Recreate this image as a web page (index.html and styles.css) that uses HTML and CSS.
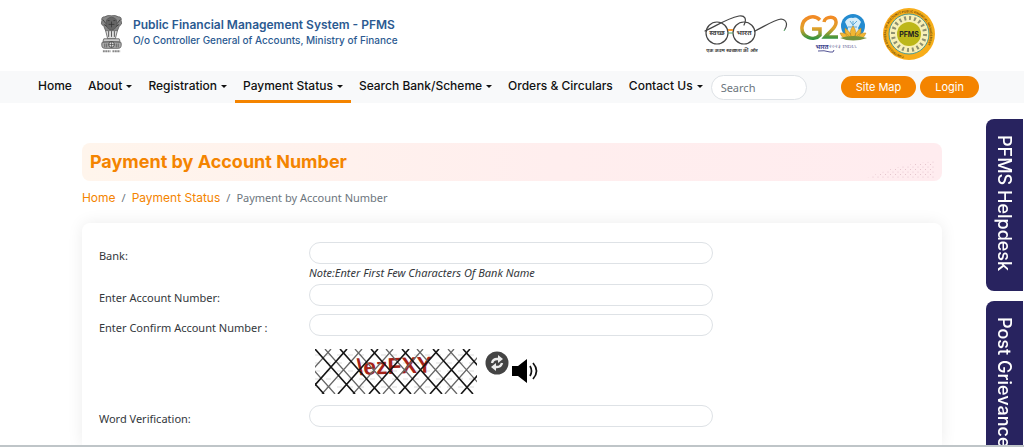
FILE: index.html
```
<!DOCTYPE html>
<html lang="en">
<head>
  <meta charset="UTF-8">
  <meta name="viewport" content="width=device-width, initial-scale=1.0">
  <title>Payment by Account Number</title>
  <link rel="stylesheet" href="styles.css">
</head>
<body>
  <header class="header">
    <a href="#" class="brand">
      <svg class="emblem" viewBox="0 0 24 40" aria-hidden="true">
        <g fill="#888" stroke="#555" stroke-width=".8">
          <path d="M2 6Q1 2 5 2Q8 0 12 1Q16 0 19 2Q23 2 22 6Q24 10 20 12L18 17H6L4 12Q0 10 2 6Z"/>
          <path d="M7 5Q12 0 17 5L18 11Q15 16 12 16Q9 16 6 11Z" fill="#666"/>
          <path d="M6 17L8 25H16L18 17" fill="#ddd"/>
          <path d="M4 25H20L21 28H3Z" fill="#ccc"/>
          <path d="M2 29Q12 27 22 29Q23 35 19 35H5Q1 35 2 29Z" fill="#aaa"/>
        </g>
        <path d="M8 6h2M14 6h2M9 10h6M12 7v6M3 5l3 4M21 5l-3 4M4 10l3 2M20 10l-3 2M9 17v6M12 17v6M15 17v6" stroke="#333" stroke-width=".8" fill="none"/>
        <circle cx="12" cy="31" r="3" fill="#ddd" stroke="#444"/>
        <path d="M9 31h6M12 28v6M5 30v4M7 30v4M17 30v4M19 30v4" stroke="#444" stroke-width=".7"/>
        <path d="M3 38h8M13 38h8" stroke="#888" stroke-width="2" stroke-dasharray="2 .5"/>
      </svg>
      <span class="brand-text">
        <strong>Public Financial Management System - PFMS</strong>
        <span>O/o Controller General of Accounts, Ministry of Finance</span>
      </span>
    </a>
    <div class="logos">
      <svg width="86" height="42" viewBox="0 0 86 42" role="img" aria-label="Swachh Bharat">
        <g fill="none" stroke="#444" stroke-width="1.2" stroke-linecap="round">
          <circle cx="13" cy="20" r="11"/>
          <circle cx="40" cy="20" r="11"/>
          <path d="M1 18C14 12 22 6 35 3C41 2 43 6 40 12"/>
          <path d="M51 18C61 13 70 7 77 6C84 7 83 13 81 16"/>
        </g>
        <path d="M24 17h5" stroke="#f79a35" stroke-width="2"/>
        <path d="M24 20h5M81 16l-1 2" stroke="#4a9d5b"/>
        <text x="13" y="22" class="hindi">स्वच्छ</text>
        <text x="40" y="22" class="hindi">भारत</text>
        <text x="28" y="39" class="hindi small">एक कदम स्वच्छता की ओर</text>
      </svg>
      <svg width="68" height="40" viewBox="0 0 68 40" role="img" aria-label="G20 India">
        <defs>
          <linearGradient id="g20" x2="0" y2="1">
            <stop offset="0" stop-color="#f28a25"/>
            <stop offset=".55" stop-color="#dfa12a"/>
            <stop offset="1" stop-color="#379540"/>
          </linearGradient>
        </defs>
        <path d="M20 6C14 0 3 3 2 13C1 23 14 28 20 21V15H12M24 8C25 2 37 1 36 9C36 14 29 18 25 23H38" fill="none" stroke="url(#g20)" stroke-width="3.5"/>
        <circle cx="53" cy="12" r="12" fill="#238bd0"/>
        <path d="M45 8Q48 3 53 4Q57 2 61 8L58 14L60 19H47L48 14Z" fill="#d7edf8"/>
        <path d="M50 7l3 4 4-4M48 13h9M53 7v11" stroke="#5ea9d6" fill="none"/>
        <path d="M53 12Q58 18 54 25H52Q48 18 53 12ZM45 14Q51 18 52 25Q44 23 45 14ZM61 14Q55 18 54 25Q62 23 61 14ZM40 19Q48 18 51 25Q43 27 40 19ZM66 19Q58 18 55 25Q63 27 66 19Z" fill="#f2b632" stroke="#bc851f" stroke-width=".5"/>
        <path d="M40 24Q53 20 67 24Q53 29 40 24Z" fill="#78933b"/>
        <text x="22" y="35" class="hindi blue">भारत</text>
        <text x="43" y="34" class="g20-text">२०२३ INDIA</text>
        <path d="M18 37Q24 36 30 38Q34 39 34 36" fill="none" stroke="#545595"/>
      </svg>
      <svg width="54" height="54" viewBox="0 0 54 54" role="img" aria-label="PFMS">
        <defs><path id="ring" d="M22 49A22 22 0 1 1 30 49"/></defs>
        <circle cx="27" cy="27" r="26" fill="#f8ad19"/>
        <circle cx="27" cy="27" r="20" fill="#f8f0b7" stroke="#4c9990"/>
        <circle cx="27" cy="27" r="16" fill="none" stroke="#8f9070" stroke-width="4" stroke-dasharray="2 3"/>
        <circle cx="27" cy="27" r="12" fill="#bdb719"/>
        <text class="ring-text"><textPath href="#ring">CONTROLLER GENERAL OF ACCOUNTS PUBLIC FINANCIAL MANAGEMENT</textPath></text>
        <text x="27" y="30" class="seal-text">PFMS</text>
      </svg>
    </div>
  </header>

  <nav class="navbar">
    <a href="#">Home</a>
    <a href="#" class="drop">About</a>
    <a href="#" class="drop">Registration</a>
    <a href="#" class="drop active">Payment Status</a>
    <a href="#" class="drop">Search Bank/Scheme</a>
    <a href="#">Orders &amp; Circulars</a>
    <a href="#" class="drop">Contact Us</a>
    <input class="search" type="search" placeholder="Search" aria-label="Search">
    <div class="nav-buttons">
      <button type="button">Site Map</button>
      <button type="button">Login</button>
    </div>
  </nav>

  <main class="container">
    <div class="page-title">
      <h1>Payment by Account Number</h1>
      <svg class="dots" viewBox="0 0 70 18" aria-hidden="true">
        <defs>
          <pattern id="dot" width="5" height="5" patternUnits="userSpaceOnUse">
            <circle cx="1" cy="1" r=".5" fill="#ddb9c2"/>
            <circle cx="3.5" cy="3.5" r=".5" fill="#ddb9c2"/>
          </pattern>
        </defs>
        <path d="M0 17Q30 3 68 0V17Z" fill="url(#dot)"/>
      </svg>
    </div>
    <div class="breadcrumb">
      <a href="#">Home</a><span>/</span><a href="#">Payment Status</a><span>/</span><em>Payment by Account Number</em>
    </div>

    <form class="card">
      <label for="bank">Bank:</label>
      <div>
        <input type="text" id="bank">
        <p class="note">Note:Enter First Few Characters Of Bank Name</p>
      </div>
      <label for="account">Enter Account Number:</label>
      <input type="text" id="account">
      <label for="confirm">Enter Confirm Account Number :</label>
      <input type="text" id="confirm">
      <div class="captcha">
        <svg width="162" height="45" viewBox="0 0 162 45" role="img" aria-label="Verification picture">
          <path d="M0 6H162M0 14H162M0 22H162M0 30H162M0 38H162" stroke="#ddd" stroke-dasharray="5 6"/>
          <text x="42" y="26" class="captcha-text" transform="rotate(-2 42 26)">\ezFXY</text>
          <path d="M10 0L50 45M40 0L80 45M71 0L111 45M102 0L142 45M133 0L173 45M-20 0L20 45M16 0L-24 45M47 0L7 45M78 0L38 45M108 0L68 45M139 0L99 45M170 0L130 45" stroke="#666" stroke-width="1.3" fill="none"/>
          <path d="M0 0L40 45M25 0L65 45M56 0L96 45M87 0L127 45M118 0L158 45M148 0L188 45M-31 0L9 45M32 0L-8 45M63 0L23 45M94 0L54 45M124 0L84 45M155 0L115 45M186 0L146 45" stroke="#151515" stroke-width="1.6" fill="none"/>
        </svg>
        <button type="button" class="icon-btn refresh" aria-label="Refresh">
          <svg width="24" height="24" viewBox="0 0 24 24">
            <circle cx="12" cy="12" r="11.5" fill="#444"/>
            <path d="M7 12Q8 8 12 8H14M17 12Q16 16 12 16H10" fill="none" stroke="#eee" stroke-width="2.4"/>
            <path d="M13 4l5 4-5 4zM11 20l-5-4 5-4z" fill="#eee"/>
          </svg>
        </button>
        <button type="button" class="icon-btn sound" aria-label="Listen">
          <svg width="28" height="26" viewBox="0 0 28 26">
            <path d="M1 8H7L16 1V25L7 18H1Z"/>
            <path d="M19 8Q22 13 19 18M22 5Q29 13 22 21" fill="none" stroke="#111" stroke-width="1.7"/>
          </svg>
        </button>
      </div>
      <label for="word">Word Verification:</label>
      <input type="text" id="word">
    </form>
  </main>

  <aside class="side-tabs">
    <a href="#">PFMS Helpdesk</a>
    <a href="#">Post Grievance</a>
  </aside>
</body>
</html>
```
FILE: styles.css
```
* {
  box-sizing: border-box;
}
body {
  margin: 0;
  min-height: 100vh;
  display: flex;
  flex-direction: column;
  background: #fff;
  color: #33373b;
  font-family: "Noto Sans", "Open Sans", sans-serif;
  font-size: 11px;
  border-bottom: 2px solid #bfc5c8;
}
a {
  text-decoration: none;
}
input,
button {
  font: inherit;
}
.header {
  height: 71px;
  padding: 0 88px 4px 100px;
  display: flex;
  align-items: center;
  justify-content: space-between;
}
.brand {
  display: flex;
  gap: 10px;
  color: #2b5a91;
  font-family: Inter, sans-serif;
}
.emblem {
  width: 23px;
  height: 40px;
}
.brand-text {
  display: flex;
  flex-direction: column;
  padding-top: 3px;
  font-size: 10px;
  font-weight: 500;
  line-height: 14px;
}
.brand-text strong {
  font-size: 12px;
  font-weight: 600;
  line-height: 16px;
}
.logos {
  display: flex;
  align-items: center;
  gap: 10px;
}
.logos svg:last-child {
  margin-left: 4px;
}
.hindi {
  font: bold 7px "Noto Sans", sans-serif;
  text-anchor: middle;
  fill: #444;
}
.small {
  font-size: 5px;
}
.blue {
  font-size: 6px;
  fill: #39408a;
}
.g20-text {
  font: 5px "Liberation Serif", serif;
  text-anchor: middle;
  fill: #666997;
}
.seal-text {
  font: bold 7px Inter, sans-serif;
  text-anchor: middle;
  fill: #222;
}
.ring-text {
  font: bold 3px Inter, sans-serif;
  fill: #76520d;
}

/* menu */
.navbar {
  height: 32px;
  padding: 0 45px 0 30px;
  display: flex;
  align-items: center;
  background: #f8f9fa;
  font-family: Inter, sans-serif;
}
.navbar a {
  height: 32px;
  padding: 0 8px;
  color: #111;
  font-size: 12px;
  font-weight: 500;
  line-height: 29px;
  white-space: nowrap;
  border-bottom: 3px solid transparent;
}
.navbar .active {
  border-color: #f48400;
}
.drop::after {
  content: "";
  display: inline-block;
  margin-left: 4px;
  vertical-align: 2px;
  border: 3px solid transparent;
  border-top-color: #111;
  border-bottom: 0;
}
.search {
  width: 96px;
  height: 25px;
  padding: 0 9px;
  border: 1px solid #dee2e6;
  border-radius: 13px;
  background: #fff;
  font-family: "Noto Sans", sans-serif;
}
.search::placeholder {
  color: #6c757d;
}
.nav-buttons {
  display: flex;
  gap: 4px;
  margin-left: auto;
}
.nav-buttons button {
  height: 22px;
  padding: 0 15px;
  border: 0;
  border-radius: 11px;
  background: #f48400;
  color: #fff;
  white-space: nowrap;
}

.container {
  flex: 1;
  display: flex;
  flex-direction: column;
  width: 84%;
  margin: 0 auto;
  padding-top: 40px;
}
.page-title {
  display: flex;
  align-items: center;
  justify-content: space-between;
  height: 38px;
  padding: 0 5px 2px 8px;
  border-radius: 8px;
  background: linear-gradient(90deg, #fff5ec, #ffeeee 55%, #ffecef);
}
h1 {
  margin: 0;
  color: #f48400;
  font: bold 18px Inter, sans-serif;
}
.dots {
  width: 70px;
  align-self: flex-end;
}
.breadcrumb {
  display: flex;
  gap: 6px;
  padding: 8px 0 17px;
  color: #6c757d;
  line-height: 17px;
}
.breadcrumb a {
  color: #f48400;
  font-family: Inter, sans-serif;
  font-size: 12px;
}
.breadcrumb em {
  font-style: normal;
}
.card {
  flex: 1;
  display: grid;
  grid-template-columns: 202px minmax(0, 404px);
  column-gap: 8px;
  align-content: start;
  padding: 19px 17px 8px;
  border-radius: 8px 8px 0 0;
  box-shadow: 0 0 16px rgba(0, 0, 0, 0.08);
}
.card label {
  padding-top: 6px;
  line-height: 16px;
}
.card input {
  display: block;
  width: 100%;
  height: 22px;
  margin-bottom: 8px;
  padding: 0 10px;
  border: 1px solid #dee2e6;
  border-radius: 11px;
  background: #fff;
}
.note {
  margin: -5px 0 5px;
  font-style: italic;
  line-height: 12px;
}
.captcha {
  grid-column: 2;
  display: flex;
  padding: 5px 0 11px 6px;
}
.captcha-text {
  font: bold 23px "Liberation Sans", sans-serif;
  fill: #a52217;
}
.icon-btn {
  padding: 0;
  border: 0;
  background: none;
  height: 26px;
}
.refresh {
  margin: 2px 0 0 8px;
}
.sound {
  margin: 9px 0 0 2px;
}

/* tabs stuck to the right edge */
.side-tabs {
  position: fixed;
  top: 119px;
  right: 1px;
  bottom: 2px;
  overflow: hidden;
  display: flex;
  flex-direction: column;
  gap: 10px;
}
.side-tabs a {
  flex: none;
  width: 37px;
  padding: 16px 0 20px;
  border-radius: 8px 0 0 8px;
  background: #28235f;
  color: #fff;
  font: 500 18px/37px Inter, sans-serif;
  writing-mode: vertical-rl;
}
```
